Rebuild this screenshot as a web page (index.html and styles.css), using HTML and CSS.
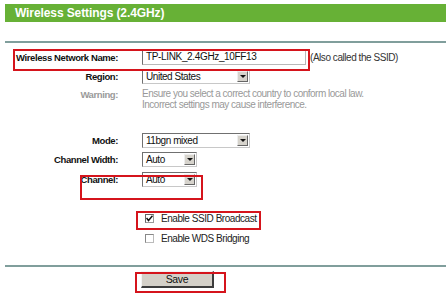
FILE: index.html
```html
<!DOCTYPE html>
<html lang="en">
<head>
    <meta charset="UTF-8">
    <title>Wireless Settings</title>
    <link rel="stylesheet" href="styles.css">
</head>
<body>
    <div class="page">
        <div class="title-bar">Wireless Settings (2.4GHz)</div>
        <div class="rule"></div>

        <div class="form">
            <div class="row row-name">
                <div class="label">Wireless Network Name:</div>
                <div class="control">
                    <div class="text-input">TP-LINK_2.4GHz_10FF13</div>
                    <span class="hint">(Also called the SSID)</span>
                </div>
            </div>

            <div class="row">
                <div class="label">Region:</div>
                <div class="control">
                    <div class="select select-wide">
                        <span class="select-value">United States</span>
                        <span class="select-arrow"></span>
                    </div>
                </div>
            </div>

            <div class="row row-warning">
                <div class="label label-muted">Warning:</div>
                <div class="control warning-text">
                    Ensure you select a correct country to conform local law.<br>
                    Incorrect settings may cause interference.
                </div>
            </div>

            <div class="row row-spaced">
                <div class="label">Mode:</div>
                <div class="control">
                    <div class="select select-wide">
                        <span class="select-value">11bgn mixed</span>
                        <span class="select-arrow"></span>
                    </div>
                </div>
            </div>

            <div class="row">
                <div class="label">Channel Width:</div>
                <div class="control">
                    <div class="select select-short">
                        <span class="select-value">Auto</span>
                        <span class="select-arrow"></span>
                    </div>
                </div>
            </div>

            <div class="row row-channel">
                <div class="label">Channel:</div>
                <div class="control">
                    <div class="select select-short">
                        <span class="select-value">Auto</span>
                        <span class="select-arrow"></span>
                    </div>
                </div>
            </div>

            <div class="row row-spaced">
                <div class="label"></div>
                <div class="control">
                    <span class="checkbox">
                        <svg width="7" height="7" viewBox="0 0 7 7"><path d="M0.5 3 L2.5 5.5 L6.5 0.8" fill="none" stroke="#111" stroke-width="1.5"/></svg>
                    </span>
                    <span class="check-label">Enable SSID Broadcast</span>
                </div>
            </div>

            <div class="row row-tight">
                <div class="label"></div>
                <div class="control">
                    <span class="checkbox checkbox-off"></span>
                    <span class="check-label">Enable WDS Bridging</span>
                </div>
            </div>
        </div>

        <div class="rule rule-bottom"></div>

        <div class="actions">
            <button class="save-btn">Save</button>
        </div>

        <!-- red annotation frames -->
        <div class="mark mark-name"></div>
        <div class="mark mark-channel"></div>
        <div class="mark mark-ssid"></div>
        <div class="mark mark-save"></div>
    </div>
</body>
</html>
```

FILE: styles.css
```css
* {
    margin: 0;
    padding: 0;
    box-sizing: border-box;
}

body {
    font-family: "Liberation Sans", Arial, sans-serif;
    font-size: 10px;
    letter-spacing: -0.45px;
    color: #111;
    background: #fff;
    width: 446px;
    height: 300px;
    overflow: hidden;
}

.page {
    position: relative;
    padding-left: 5px;
    height: 300px;
}

.title-bar {
    margin-top: 4px;
    height: 18px;
    line-height: 18px;
    padding-left: 10px;
    background: #67b136;
    color: #fff;
    font-size: 12px;
    font-weight: bold;
    letter-spacing: -0.1px;
}

.rule {
    margin-top: 19px;
    height: 2px;
    background: #809e9c;
}

.form {
    padding-top: 5px;
    display: flex;
    flex-direction: column;
    gap: 1px;
}

.row {
    display: grid;
    grid-template-columns: 113px 1fr;
    column-gap: 24px;
    align-items: center;
    height: 18px;
}

.row-warning {
    height: 22px;
    margin-top: 2px;
    align-items: start;
}

.row-spaced {
    margin-top: 20px;
}

.row-channel {
    margin-top: 1px;
}

.row-tight {
    margin-top: 1px;
}

.label {
    text-align: right;
    font-weight: bold;
    font-size: 9.5px;
    letter-spacing: -0.4px;
    white-space: nowrap;
}

.label-muted {
    color: #9a9a9a;
    padding-top: 1px;
}

.control {
    display: flex;
    align-items: center;
    white-space: nowrap;
}

.text-input {
    width: 164px;
    height: 16px;
    line-height: 14px;
    padding-left: 3px;
    border: 1px solid #b8b8b8;
    border-top-color: #6e6e6e;
    border-left-color: #6e6e6e;
    background: #fff;
    letter-spacing: -0.35px;
}

.hint {
    margin-left: 4px;
    color: #333;
}

.select {
    display: flex;
    align-items: center;
    height: 15px;
    border: 1px solid #c8c8c8;
    border-top-color: #707070;
    border-left-color: #707070;
    background: #fff;
}

.select-wide {
    width: 108px;
}

.select-short {
    width: 55px;
}

.select-value {
    flex: 1;
    padding-left: 3px;
    line-height: 13px;
}

.select-arrow {
    position: relative;
    width: 11px;
    height: 11px;
    margin-right: 1px;
    background: #d6d3cc;
    border: 1px solid #eee;
    border-right-color: #666;
    border-bottom-color: #666;
}

.select-arrow::after {
    content: "";
    position: absolute;
    left: 2px;
    top: 3px;
    border-left: 3px solid transparent;
    border-right: 3px solid transparent;
    border-top: 3px solid #111;
}

.warning-text {
    display: block;
    color: #999;
    line-height: 11px;
    letter-spacing: -0.5px;
}

.checkbox {
    display: flex;
    align-items: center;
    justify-content: center;
    width: 9px;
    height: 9px;
    margin-left: 3px;
    border: 1px solid #9a9a9a;
    border-top-color: #666;
    border-left-color: #666;
    background: #fff;
}

.checkbox-off {
    border-color: #bbb;
    border-top-color: #888;
    border-left-color: #888;
}

.check-label {
    margin-left: 7px;
    color: #222;
}

.rule-bottom {
    margin-top: 18px;
}

.actions {
    padding-left: 136px;
    padding-top: 4px;
}

.save-btn {
    width: 73px;
    height: 17px;
    font-family: "Liberation Sans", Arial, sans-serif;
    font-size: 10.5px;
    letter-spacing: -0.3px;
    color: #111;
    background: #d4d0c8;
    border: 1px solid #f4f4f4;
    border-right: 2px solid #3c3c3c;
    border-bottom: 2px solid #3c3c3c;
}

.mark {
    position: absolute;
    border: 2px solid #d5141c;
}

.mark-name {
    left: 13px;
    top: 45px;
    width: 297px;
    height: 22px;
}

.mark-channel {
    left: 80px;
    top: 171px;
    width: 123px;
    height: 25px;
}

.mark-ssid {
    left: 136px;
    top: 207px;
    width: 125px;
    height: 19px;
}

.mark-save {
    left: 135px;
    top: 268px;
    width: 91px;
    height: 21px;
}
```
